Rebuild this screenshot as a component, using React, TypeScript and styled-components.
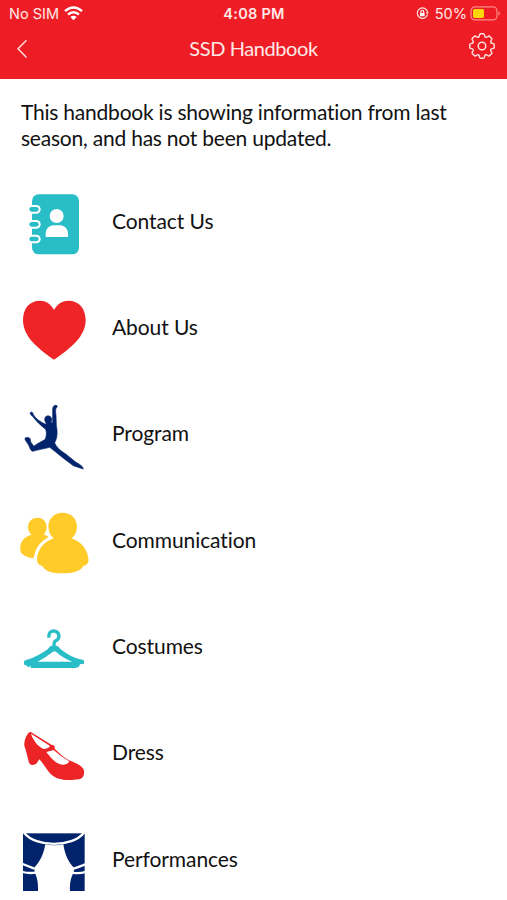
import React from 'react';
import styled, { createGlobalStyle } from 'styled-components';

type IconName = 'contact' | 'heart' | 'dancer' | 'people' | 'hanger' | 'shoe' | 'curtains';

interface Section {
  label: string;
  icon: IconName;
}

const RED = '#ee1d25';
const TEAL = '#29bdc8';
const NAVY = '#00236b';
const YELLOW = '#ffcb29';

const sections: Section[] = [
  { label: 'Contact Us', icon: 'contact' },
  { label: 'About Us', icon: 'heart' },
  { label: 'Program', icon: 'dancer' },
  { label: 'Communication', icon: 'people' },
  { label: 'Costumes', icon: 'hanger' },
  { label: 'Dress', icon: 'shoe' },
  { label: 'Performances', icon: 'curtains' },
];

function SectionIcon({ name }: { name: IconName }) {
  switch (name) {
    case 'contact':
      return (
        <Glyph viewBox="0 -3 270 240">
          <rect x="66" y="28" width="141" height="180" rx="20" fill={TEAL} />
          {[73, 118, 162].map(y => (
            <g key={y}>
              <rect x="54" y={y - 13} width="38" height="26" rx="13" fill="#fff" />
              <rect x="58" y={y - 7} width="28" height="14" rx="7" fill={TEAL} />
            </g>
          ))}
          <circle cx="140" cy="93" r="21" fill="#fff" />
          <path d="M107 156v-9c0-15 10-26 24-26h19c14 0 24 11 24 26v9z" fill="#fff" />
        </Glyph>
      );
    case 'heart':
      return (
        <Glyph viewBox="0 1 270 240">
          <path
            d="M132 61C122 42 107 33 90 33C59 33 39 56 39 91C39 139 80 174 132 210C185 174 227 139 227 91C227 56 206 33 176 33C158 33 142 42 132 61Z"
            fill="#ee2427"
          />
        </Glyph>
      );
    case 'dancer':
      return (
        <Glyph viewBox="0 5 270 240">
          <path
            d="M61 52C64 48 69 51 70 58C78 71 91 80 107 87L109 83C103 79 103 68 107 64C112 60 119 61 123 66C126 70 126 77 122 82L128 82L128 43C128 34 132 29 138 30C143 31 144 35 138 38C136 44 137 53 138 61L139 91C143 110 142 128 134 142C137 153 151 166 166 175L192 196C199 203 209 205 217 214L220 221L190 211C168 196 139 171 119 156C104 160 86 163 68 168C62 167 60 158 56 150C53 142 44 136 45 128C51 125 60 126 61 132L62 140C66 144 69 149 71 153C83 144 96 138 106 132C109 122 111 112 107 102C93 91 78 77 67 62C62 59 60 56 61 52Z"
            fill={NAVY}
            stroke={NAVY}
            strokeWidth="2"
          />
        </Glyph>
      );
    case 'people':
      return (
        <Glyph viewBox="0 3 270 240">
          <g fill={YELLOW}>
            <path d="M82 47C99 47 110 59 110 75C110 85 106 93 101 98C107 99 112 101 116 105C93 117 76 137 71 168C56 168 43 162 33 152C25 128 38 103 65 98C58 93 54 85 54 75C54 59 66 47 82 47Z" />
            <path d="M158 32C183 32 201 50 201 74C201 88 195 100 185 109C213 119 231 140 235 168C237 181 232 190 221 191C212 207 190 214 158 214C126 214 106 208 97 192C85 190 80 181 81 169C84 141 102 119 131 109C121 100 115 88 115 74C115 50 133 32 158 32Z" />
          </g>
        </Glyph>
      );
    case 'hanger':
      return (
        <Glyph viewBox="0 -17 270 240">
          <path
            d="M117 69C114 47 132 47 138 51C149 55 149 71 141 76C133 80 132 81 132 94"
            fill="none"
            stroke={TEAL}
            strokeWidth="10"
          />
          <path
            d="M120 95Q132 90 144 95L152 104C173 121 195 132 220 136Q224 140 222 147L210 149Q207 159 201 159L199 155L199 160H62V153L58 156Q54 160 51 153L43 150Q39 140 46 137C72 130 94 117 113 104ZM129 111C114 123 98 132 83 141H187C169 134 151 123 138 111Q133 108 129 111Z"
            fill={TEAL}
            fillRule="evenodd"
          />
        </Glyph>
      );
    case 'shoe':
      return (
        <Glyph viewBox="0 -13 270 240">
          <path
            d="M61 34C50 39 42 60 43 76C49 91 52 109 57 127C61 135 72 137 80 129L88 117C99 127 108 145 119 158C134 174 155 180 184 179L207 177C219 174 224 164 222 151C219 137 202 131 183 122C173 118 163 112 153 103L134 85C136 78 132 73 124 73Z"
            fill="#ed2426"
          />
          <path d="M63 40L119 76L119 79C114 83 108 85 101 86C84 79 69 59 63 40Z" fill="#fff" />
          <path d="M109 95L131 89C145 101 160 113 178 123C174 132 160 136 148 131C131 124 119 108 109 95Z" fill="#fff" />
        </Glyph>
      );
    case 'curtains':
      return (
        <Glyph viewBox="0 0 270 240">
          <rect x="39" y="34" width="185" height="173" fill={NAVY} />
          <path
            d="M106 67C101 96 90 120 72 138L75 154C82 168 85 184 84 208H180C179 184 182 168 190 154L193 138C177 123 165 101 160 67Q132 73 106 67Z"
            fill="#fff"
          />
          <path
            d="M42 32C78 77 186 77 222 32M38 126L73 140M38 150Q56 155 77 152M226 127L192 140M226 150Q207 156 188 152"
            fill="none"
            stroke="#fff"
            strokeWidth="7"
          />
        </Glyph>
      );
  }
}

export default function App() {
  return (
    <>
      <GlobalStyle />
      <Screen>
        <Header>
          <StatusBar>
            <Carrier>
              No SIM
              <svg width="19" height="15" viewBox="0 0 19 15">
                <g fill="none" stroke="#fff" strokeWidth="2.4">
                  <path d="M1 5.2Q9.5-2.2 18 5.2" />
                  <path d="M4 8.5Q9.5 3.8 15 8.5" />
                </g>
                <path d="M6.3 11Q9.5 8.3 12.7 11L9.5 14.3Z" fill="#fff" />
              </svg>
            </Carrier>
            <Clock>4:08 PM</Clock>
            <Power>
              <svg width="13" height="13" viewBox="0 0 13 13" fill="none" stroke="#ffe3e3" strokeWidth="1.2">
                <path d="M11.5 7.6A5.2 5.2 0 1 1 11.6 5.2" />
                <path d="M9.8 5.3h2.9l-1.4 2.1z" fill="#ffe3e3" stroke="none" />
                <rect x="4" y="6" width="4.6" height="3.2" fill="#fff" stroke="none" />
                <path d="M4.9 6V4.8a1.4 1.4 0 0 1 2.8 0V6" />
              </svg>
              <span>50%</span>
              <svg width="31" height="15" viewBox="0 0 31 15">
                <rect x="1" y=".9" width="26" height="13" rx="4" fill="none" stroke="#ff8d88" strokeWidth="1.2" />
                <rect x="3" y="2.9" width="11" height="9" rx="1.6" fill="#ffd60a" />
                <path d="M28.5 5.2q3 2.2 0 4.4z" fill="#ff8d88" />
              </svg>
            </Power>
          </StatusBar>
          <NavBar>
            <NavButton aria-label="Back">
              <svg width="12" height="20" viewBox="0 0 12 20" fill="none" stroke="#ffe4e3" strokeWidth="1.4">
                <path d="M10.5 1.3L2 9.8l8.5 8.6" />
              </svg>
            </NavButton>
            <Title>SSD Handbook</Title>
            <NavButton aria-label="Settings">
              <svg width="28" height="28" viewBox="-14 -14 28 28" fill="none" stroke="#ffe4e3" strokeWidth="1.4">
                <path d={gearPath()} strokeLinejoin="round" />
                <circle r="3.8" />
              </svg>
            </NavButton>
          </NavBar>
        </Header>
        <Notice>This handbook is showing information from last season, and has not been updated.</Notice>
        <List>
          {sections.map(section => (
            <Row key={section.label}>
              <SectionIcon name={section.icon} />
              <Label>{section.label}</Label>
            </Row>
          ))}
        </List>
      </Screen>
    </>
  );
}

// Eight rounded teeth, one pointing straight up
function gearPath() {
  const point = (radius: number, degrees: number) => {
    const angle = (degrees * Math.PI) / 180;
    return `${(radius * Math.sin(angle)).toFixed(2)} ${(-radius * Math.cos(angle)).toFixed(2)}`;
  };
  let d = `M${point(12.3, -8)}`;
  for (let a = 0; a < 360; a += 45) {
    d += `L${point(12.3, a + 8)}Q${point(12.2, a + 12)} ${point(10.8, a + 14)}`;
    d += `Q${point(8.3, a + 22.5)} ${point(10.8, a + 31)}`;
    d += `Q${point(12.2, a + 33)} ${point(12.3, a + 37)}`;
  }
  return `${d}Z`;
}

// Styled Components
const GlobalStyle = createGlobalStyle`
  * {
    box-sizing: border-box;
  }

  body {
    margin: 0;
    background: #fff;
  }
`;

const Screen = styled.div`
  display: flex;
  flex-direction: column;
  width: 507px;
  height: 900px;
  overflow: hidden;
  background: #fff;
  color: #111;
  font-family: Lato, sans-serif;
  font-variant-ligatures: none;
`;

const Header = styled.header`
  flex: none;
  height: 79px;
  background: ${RED};
  color: #ffe9e8;
`;

const StatusBar = styled.div`
  display: grid;
  grid-template-columns: 1fr auto 1fr;
  align-items: center;
  height: 27px;
  padding: 0 6px 0 9px;
  font-family: Inter, sans-serif;
  font-size: 14.5px;
  line-height: 27px;
`;

const Carrier = styled.div`
  display: flex;
  align-items: center;
  gap: 5px;
`;

const Clock = styled.div`
  margin-right: 2px;
  font-weight: 600;
  letter-spacing: 0.25px;
`;

const Power = styled.div`
  display: flex;
  align-items: center;
  justify-content: flex-end;

  span {
    margin: 0 3px 0 6px;
  }
`;

const NavBar = styled.div`
  display: grid;
  grid-template-columns: 40px 1fr 40px;
  align-items: center;
  height: 44px;
  padding: 0 5px 0 2px;
`;

const NavButton = styled.button`
  display: flex;
  align-items: center;
  justify-content: center;
  height: 40px;
  padding: 0;
  border: 0;
  background: transparent;

  &:last-child {
    padding-bottom: 6px;
  }
`;

const Title = styled.h1`
  margin: 0;
  padding: 0 0 2px 3px;
  text-align: center;
  font-size: 20px;
  font-weight: 400;
  letter-spacing: -0.42px;
  line-height: 40px;
`;

const Notice = styled.p`
  flex: none;
  height: 92px;
  margin: 0;
  padding: 20px 40px 0 21px;
  font-size: 21px;
  letter-spacing: -0.22px;
  line-height: 26px;
`;

const List = styled.div`
  flex: none;
`;

const Row = styled.div`
  display: flex;
  align-items: center;
  height: 106.33px;
  padding-left: 10px;
`;

const Glyph = styled.svg`
  flex: none;
  width: 90px;
  height: 80px;
`;

const Label = styled.span`
  margin: 0 0 7px 12px;
  font-size: 21px;
  letter-spacing: -0.08px;
  line-height: 26px;
`;
